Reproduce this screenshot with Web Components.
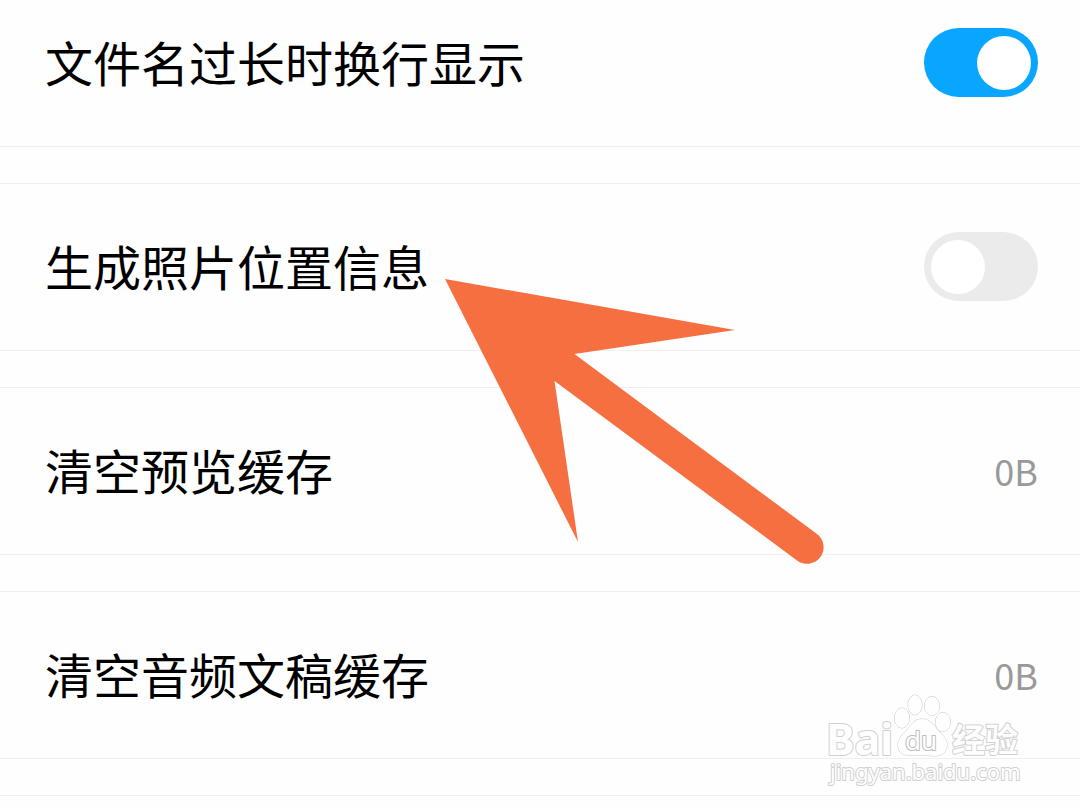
<!DOCTYPE html>
<html lang="zh-CN">
<head>
<meta charset="utf-8">
<meta name="viewport" content="width=device-width, initial-scale=1">
<title>设置</title>
<style>
  body { margin: 0; background: #fefefe; font-family: "Noto Sans CJK SC", "Noto Sans", sans-serif; color: #000; }
</style>
</head>
<body>
<settings-page>
  <switch-row checked>文件名过长时换行显示</switch-row>
  <switch-row>生成照片位置信息</switch-row>
  <action-row value="0B">清空预览缓存</action-row>
  <action-row value="0B">清空音频文稿缓存</action-row>
  <pointer-arrow slot="overlay"></pointer-arrow>
  <site-mark slot="overlay"></site-mark>
</settings-page>

<script>
const rowStyle = `
  :host { display: block; border-top: 1px solid #efefef; border-bottom: 1px solid #efefef; }
  :host(:first-of-type[checked]) { border-top: 0; --row-top: 28px; }
  .row {
    display: flex; align-items: flex-start; justify-content: space-between; gap: 24px;
    box-sizing: border-box; width: 100%; margin: 0; border: 0; background: none;
    padding: var(--row-top, 48px) 42px 49px 45px;
    font: inherit; color: inherit; text-align: left; cursor: pointer;
  }
  .name { font-size: 48px; line-height: 66px; }
`;

class SettingsPage extends HTMLElement {
  constructor() {
    super();
    this.attachShadow({ mode: 'open' }).innerHTML = `
      <style>
        :host { display: block; position: relative; }
        main { display: flex; flex-direction: column; gap: 36px; }
        .end { height: 14px; border-top: 1px solid #efefef; }
      </style>
      <main><slot></slot><div class="end"></div></main>
      <slot name="overlay"></slot>`;
  }
}

class SwitchRow extends HTMLElement {
  constructor() {
    super();
    this.attachShadow({ mode: 'open' }).innerHTML = `
      <style>${rowStyle}
        input {
          appearance: none; box-sizing: border-box; flex: none; margin: 0;
          width: 114px; height: 69px; padding: 7px; border-radius: 35px;
          display: flex; align-items: center; background: #ebebeb; cursor: pointer;
        }
        input::before { content: ""; width: 54px; height: 54px; border-radius: 50%; background: #fff; }
        input:checked { background: #08a6ff; justify-content: flex-end; }
      </style>
      <label class="row"><span class="name"><slot></slot></span><input type="checkbox" role="switch"></label>`;
  }
  connectedCallback() {
    this.shadowRoot.querySelector('input').checked = this.hasAttribute('checked');
  }
}

class ActionRow extends HTMLElement {
  constructor() {
    super();
    this.attachShadow({ mode: 'open' }).innerHTML = `
      <style>${rowStyle}
        .value { font-size: 36px; line-height: 69px; color: #999; }
      </style>
      <button class="row" type="button"><span class="name"><slot></slot></span><span class="value"></span></button>`;
  }
  connectedCallback() {
    this.shadowRoot.querySelector('.value').textContent = this.getAttribute('value');
  }
}

class PointerArrow extends HTMLElement {
  constructor() {
    super();
    this.attachShadow({ mode: 'open' }).innerHTML = `
      <style>
        :host { display: block; position: absolute; left: 445px; top: 278px; pointer-events: none; }
        svg { display: block; }
      </style>
      <svg width="380" height="288" viewBox="0 0 380 288" aria-hidden="true">
        <path fill="#f66f41" d="M0 1 290 52 129.500 76 372 256A16.500 16.500 0 0 1 352 282.500L109.500 103 133 264Z"/>
      </svg>`;
  }
}

class SiteMark extends HTMLElement {
  constructor() {
    super();
    this.attachShadow({ mode: 'open' }).innerHTML = `
      <style>
        :host { display: block; position: absolute; right: 50px; bottom: 18px; pointer-events: none; }
        svg { display: block; }
        text, .paw { fill: #fefefe; stroke: #d0d0d0; stroke-width: 2px; paint-order: stroke; stroke-linejoin: round; }
        .paw { stroke-width: 1px; stroke: #c8c8c8; }
        .latin { font-family: "Noto Sans", sans-serif; }
        .brand { font-size: 43px; font-weight: 700; }
        .du { font-size: 26px; stroke: #bdbdbd; }
        .cjk { font-size: 33px; font-weight: 700; }
        .url { font-size: 22px; }
      </style>
      <svg width="205" height="102" viewBox="0 0 205 102" role="img" aria-label="Baidu 经验">
        <text class="latin brand" x="1" y="65">Bai</text>
        <g class="paw">
          <ellipse cx="77" cy="28" rx="7.500" ry="10"/>
          <ellipse cx="90" cy="15" rx="7" ry="10"/>
          <ellipse cx="107" cy="16" rx="7.500" ry="9.500"/>
          <ellipse cx="118" cy="32" rx="7.500" ry="9.500"/>
          <path d="M97 29C104 29 108 34 112 39C116 44 122 48 122 55C122 62 117 66 110 66C105 66 102 65 97 65C92 65 88 66 83 65C76 65 73 61 73 55C73 48 78 44 82 40C86 35 89 29 97 29Z"/>
        </g>
        <text class="latin du" x="80" y="60">du</text>
        <text class="cjk" x="127" y="62">经验</text>
        <text class="latin url" x="5" y="90">jingyan.baidu.com</text>
      </svg>`;
  }
}

customElements.define('settings-page', SettingsPage);
customElements.define('switch-row', SwitchRow);
customElements.define('action-row', ActionRow);
customElements.define('pointer-arrow', PointerArrow);
customElements.define('site-mark', SiteMark);
</script>
</body>
</html>
